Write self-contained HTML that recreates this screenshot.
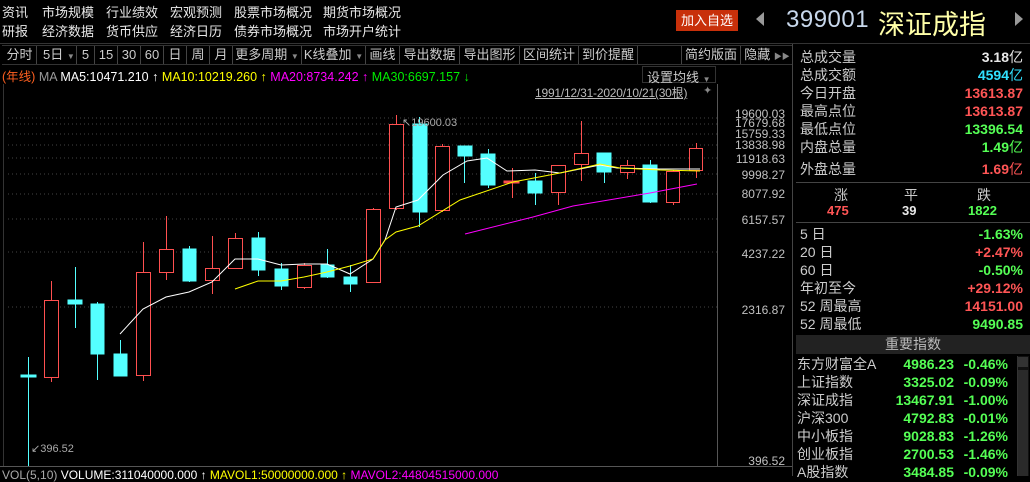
<!DOCTYPE html>
<html><head><meta charset="utf-8"><style>
*{margin:0;padding:0;box-sizing:border-box}
body{width:1030px;height:476px;background:#000;overflow:hidden;position:relative;font-family:"Liberation Sans","Noto Sans CJK SC",sans-serif;color:#ddd}
.a{position:absolute;white-space:nowrap}
.nav{font-size:13px;color:#e8e8e8}
.tb{position:absolute;top:46px;height:18px;font-size:13px;color:#ccc;border-right:1px solid #444;text-align:center;line-height:18px}
.rp{font-size:14px;color:#ccc}
.r{text-align:right}
.red{color:#ff5555}.grn{color:#55ff55}.cy{color:#30e0ff}.wh{color:#e8e8e8}
</style></head><body>
<div class="a nav" style="left:2px;top:2px">资讯</div>
<div class="a nav" style="left:42px;top:2px">市场规模</div>
<div class="a nav" style="left:106px;top:2px">行业绩效</div>
<div class="a nav" style="left:170px;top:2px">宏观预测</div>
<div class="a nav" style="left:234px;top:2px">股票市场概况</div>
<div class="a nav" style="left:323px;top:2px">期货市场概况</div>
<div class="a nav" style="left:2px;top:21px">研报</div>
<div class="a nav" style="left:42px;top:21px">经济数据</div>
<div class="a nav" style="left:106px;top:21px">货币供应</div>
<div class="a nav" style="left:170px;top:21px">经济日历</div>
<div class="a nav" style="left:234px;top:21px">债券市场概况</div>
<div class="a nav" style="left:323px;top:21px">市场开户统计</div>
<div class="a" style="left:676px;top:10px;width:62px;height:21px;background:#c8300a;color:#fff;font-size:13px;line-height:21px;text-align:center">加入自选</div>
<div class="a" style="left:756px;top:12px;width:0;height:0;border-top:7px solid transparent;border-bottom:7px solid transparent;border-right:8px solid #999"></div>
<div class="a" style="left:786px;top:6px;font-size:24px;color:#c8d8ec;letter-spacing:0.5px">399001</div>
<div class="a" style="left:878px;top:3px;font-size:27px;color:#ffffa8">深证成指</div>
<div class="a" style="left:1015px;top:12px;width:0;height:0;border-top:7px solid transparent;border-bottom:7px solid transparent;border-left:8px solid #999"></div>
<div class="a" style="left:0;top:43px;width:1030px;height:1px;background:#333"></div>
<div class="a" style="left:2px;top:45px;width:790px;height:20px;border-top:1px solid #333;border-bottom:1px solid #333"></div>
<div class="tb" style="left:3px;width:34px">分时</div>
<div class="tb" style="left:37px;width:40px;text-align:left;padding-left:6px">5日 <span style="font-size:8px;color:#888">▼</span></div>
<div class="tb" style="left:77px;width:18px">5</div>
<div class="tb" style="left:95px;width:23px">15</div>
<div class="tb" style="left:118px;width:23px">30</div>
<div class="tb" style="left:141px;width:23px">60</div>
<div class="tb" style="left:164px;width:23px">日</div>
<div class="tb" style="left:187px;width:23px">周</div>
<div class="tb" style="left:210px;width:23px">月</div>
<div class="tb" style="left:233px;width:69px">更多周期 <span style="font-size:8px;color:#888">▼</span></div>
<div class="tb" style="left:302px;width:64px">K线叠加 <span style="font-size:8px;color:#888">▼</span></div>
<div class="tb" style="left:366px;width:34px">画线</div>
<div class="tb" style="left:400px;width:60px">导出数据</div>
<div class="tb" style="left:460px;width:60px">导出图形</div>
<div class="tb" style="left:520px;width:59px">区间统计</div>
<div class="tb" style="left:579px;width:59px">到价提醒</div>
<div class="tb" style="left:681px;width:60px;border-left:1px solid #444">简约版面</div>
<div class="tb" style="left:741px;width:52px;border-right:none">隐藏 <span style="font-size:8px;color:#888">▶▶</span></div>
<div class="a" style="left:2px;top:66px;font-size:12.5px"><span style="color:#ff6020">(年线)</span> <span style="color:#999">MA</span> <span style="color:#fff">MA5:10471.210 ↑</span> <span style="color:#ffff00">MA10:10219.260 ↑</span> <span style="color:#ff00ff">MA20:8734.242 ↑</span> <span style="color:#00ee00">MA30:6697.157 ↓</span></div>
<div class="a" style="left:642px;top:66px;width:74px;height:17px;border:1px solid #333;font-size:13px;color:#ccc;padding-left:4px">设置均线 <span style="font-size:8px;color:#888">▼</span></div>
<div class="a" style="left:535px;top:84px;font-size:12px;color:#bbb;text-decoration:underline;letter-spacing:-0.2px">1991/12/31-2020/10/21(30根)</div>
<div class="a" style="left:703px;top:84px;font-size:11px;color:#888">✦</div>
<svg class="a" style="left:0;top:0" width="793" height="476">
<g stroke="#444" stroke-dasharray="1,3">
<line x1="8" x2="717" y1="118" y2="118"/><line x1="8" x2="717" y1="124" y2="124"/><line x1="8" x2="717" y1="134" y2="134"/><line x1="8" x2="717" y1="145" y2="145"/><line x1="8" x2="717" y1="158" y2="158"/><line x1="8" x2="717" y1="174" y2="174"/><line x1="8" x2="717" y1="194" y2="194"/><line x1="8" x2="717" y1="219" y2="219"/><line x1="8" x2="717" y1="252" y2="252"/><line x1="8" x2="717" y1="307" y2="307"/>
</g>
<line x1="717.5" x2="717.5" y1="84" y2="466" stroke="#555"/>
<line x1="3.5" x2="3.5" y1="84" y2="466" stroke="#333"/>
<line x1="0" x2="793" y1="466.5" y2="466.5" stroke="#555"/>
<line x1="792.5" x2="792.5" y1="44" y2="476" stroke="#444"/>
<g fill="#54ffff" stroke="#54ffff">
<line x1="28.5" x2="28.5" y1="357" y2="466"/><rect x="21" y="375" width="15" height="2"/>
<line x1="75.5" x2="75.5" y1="267" y2="328"/><rect x="68" y="300" width="14" height="4"/>
<line x1="97.5" x2="97.5" y1="302" y2="380"/><rect x="91" y="304" width="13" height="50"/>
<line x1="120.5" x2="120.5" y1="340" y2="354"/><rect x="114" y="354" width="13" height="22"/>
<line x1="189.5" x2="189.5" y1="246" y2="282"/><rect x="183" y="249" width="13" height="32"/>
<line x1="258.5" x2="258.5" y1="232" y2="276"/><rect x="252" y="238" width="13" height="32"/>
<line x1="281.5" x2="281.5" y1="263" y2="290"/><rect x="275" y="269" width="13" height="17"/>
<line x1="327.5" x2="327.5" y1="249" y2="278"/><rect x="321" y="265" width="13" height="12"/>
<line x1="350.5" x2="350.5" y1="265" y2="292"/><rect x="344" y="277" width="13" height="7"/>
<line x1="419.5" x2="419.5" y1="117" y2="227"/><rect x="413" y="124" width="14" height="88"/>
<line x1="464.5" x2="464.5" y1="146" y2="183"/><rect x="458" y="146" width="14" height="10"/>
<line x1="488.5" x2="488.5" y1="149" y2="188"/><rect x="481" y="154" width="14" height="31"/>
<line x1="535.5" x2="535.5" y1="173" y2="205"/><rect x="528" y="181" width="14" height="12"/>
<line x1="604.5" x2="604.5" y1="153" y2="183"/><rect x="597" y="153" width="14" height="19"/>
<line x1="650.5" x2="650.5" y1="160" y2="203"/><rect x="643" y="165" width="14" height="37"/>
</g>
<g fill="none" stroke="#ff5050">
<line x1="51.5" x2="51.5" y1="281" y2="382"/><rect x="44.5" y="300.5" width="14" height="77" fill="#000"/>
<line x1="143.5" x2="143.5" y1="242" y2="381"/><rect x="136.5" y="272.5" width="14" height="103" fill="#000"/>
<line x1="166.5" x2="166.5" y1="216" y2="280"/><rect x="159.5" y="249.5" width="14" height="23" fill="#000"/>
<line x1="212.5" x2="212.5" y1="236" y2="294"/><rect x="205.5" y="268.5" width="14" height="12" fill="#000"/>
<line x1="235.5" x2="235.5" y1="233" y2="268"/><rect x="228.5" y="238.5" width="14" height="30" fill="#000"/>
<line x1="304.5" x2="304.5" y1="263" y2="289"/><rect x="297.5" y="265.5" width="14" height="22" fill="#000"/>
<line x1="373.5" x2="373.5" y1="208" y2="282"/><rect x="366.5" y="209.5" width="14" height="73" fill="#000"/>
<line x1="396.5" x2="396.5" y1="115" y2="210"/><rect x="389.5" y="124.5" width="14" height="84" fill="#000"/>
<line x1="442.5" x2="442.5" y1="144" y2="212"/><rect x="435.5" y="146.5" width="14" height="64" fill="#000"/>
<line x1="512.5" x2="512.5" y1="168" y2="198"/><rect x="504" y="181" width="15" height="2" fill="#ff5050"/>
<line x1="558.5" x2="558.5" y1="165" y2="205"/><rect x="551.5" y="165.5" width="14" height="27" fill="#000"/>
<line x1="581.5" x2="581.5" y1="121" y2="181"/><rect x="574.5" y="153.5" width="14" height="11" fill="#000"/>
<line x1="627.5" x2="627.5" y1="160" y2="179"/><rect x="620.5" y="165.5" width="14" height="7" fill="#000"/>
<line x1="673.5" x2="673.5" y1="170" y2="205"/><rect x="666.5" y="171.5" width="13" height="31" fill="#000"/>
<line x1="696.5" x2="696.5" y1="143" y2="178"/><rect x="689.5" y="148.5" width="13" height="22" fill="#000"/>
</g>
<polyline fill="none" stroke="#fff" points="120,334 143,309 166,297 189,292 212,282 235,259 258,259 281,265 304,264 327,264 350,274 373,259 385,240 396,207 418,200 443,175 467,161 487,158 507,171 535,170 560,173 600,165 617,168 660,169 700,169"/>
<polyline fill="none" stroke="#ffff00" points="235,289 258,281 281,281 304,277 327,272 350,266 373,259 385,240 396,232 418,226 460,200 513,182 560,173 600,164 620,168 660,170 700,171"/>
<polyline fill="none" stroke="#ff00ff" points="465,234 533,217 573,206 650,193 697,184"/>
<g font-family="Liberation Sans, sans-serif" font-size="12" fill="#c0c0c0" text-anchor="end">
<text x="785" y="118">19600.03</text><text x="785" y="127">17679.68</text><text x="785" y="138">15759.33</text><text x="785" y="149">13838.98</text><text x="785" y="163">11918.63</text><text x="785" y="179">9998.27</text><text x="785" y="198">8077.92</text><text x="785" y="224">6157.57</text><text x="785" y="258">4237.22</text><text x="785" y="314">2316.87</text><text x="785" y="465">396.52</text>
</g>
<text x="402" y="126" font-size="11" fill="#aaa" font-family="Liberation Sans, sans-serif">↖19600.03</text>
<text x="31" y="452" font-size="11" fill="#aaa" font-family="Liberation Sans, sans-serif">↙396.52</text>
</svg>
<div class="a" style="left:2px;top:468px;font-size:12px"><span style="color:#aaa">VOL(5,10)</span> <span style="color:#fff">VOLUME:311040000.000 ↑</span> <span style="color:#ff0">MAVOL1:50000000.000 ↑</span> <span style="color:#f0f">MAVOL2:44804515000.000</span></div>
<div class="a rp" style="left:800px;top:48px;line-height:18px">总成交量<br>总成交额<br>今日开盘<br>最高点位<br>最低点位<br>内盘总量</div>
<div class="a rp" style="left:800px;top:159px">外盘总量</div>
<div class="a rp r" style="right:7px;top:48px;line-height:18px;font-weight:bold"><span class="wh">3.18<span style="font-weight:normal">亿</span></span><br><span class="cy">4594<span style="font-weight:normal">亿</span></span><br><span class="red">13613.87</span><br><span class="red">13613.87</span><br><span class="grn">13396.54</span><br><span class="grn">1.49<span style="font-weight:normal">亿</span></span></div>
<div class="a rp r red" style="right:7px;top:159px;font-weight:bold">1.69<span style="font-weight:normal">亿</span></div>
<div class="a" style="left:796px;top:182px;width:234px;height:1px;background:#444"></div>
<div class="a rp" style="left:834px;top:185px">涨</div><div class="a rp" style="left:904px;top:185px">平</div><div class="a rp" style="left:977px;top:185px">跌</div>
<div class="a rp red" style="left:827px;top:203px;font-weight:bold;font-size:13px">475</div>
<div class="a rp wh" style="left:902px;top:203px;font-weight:bold;font-size:13px">39</div>
<div class="a rp grn" style="left:968px;top:203px;font-weight:bold;font-size:13px">1822</div>
<div class="a" style="left:796px;top:222px;width:234px;height:1px;background:#444"></div>
<div class="a rp" style="left:800px;top:225px;line-height:18px">5 日<br>20 日<br>60 日<br>年初至今<br>52 周最高<br>52 周最低</div>
<div class="a rp r" style="right:7px;top:225px;line-height:18px;font-weight:bold"><span class="grn">-1.63%</span><br><span class="red">+2.47%</span><br><span class="grn">-0.50%</span><br><span class="red">+29.12%</span><br><span class="red">14151.00</span><br><span class="grn">9490.85</span></div>
<div class="a" style="left:796px;top:335px;width:234px;height:19px;background:#222;color:#bbb;font-size:14px;text-align:center;line-height:19px">重要指数</div>
<div class="a rp" style="left:797px;top:355px;line-height:18px">东方财富全A<br>上证指数<br>深证成指<br>沪深300<br>中小板指<br>创业板指<br>A股指数</div>
<div class="a rp r grn" style="right:76px;top:355px;line-height:18px;font-weight:bold">4986.23<br>3325.02<br>13467.91<br>4792.83<br>9028.83<br>2700.53<br>3484.85</div>
<div class="a rp r grn" style="right:22px;top:355px;line-height:18px;font-weight:bold">-0.46%<br>-0.09%<br>-1.00%<br>-0.01%<br>-1.26%<br>-1.46%<br>-0.09%</div>
<div class="a" style="left:1017px;top:356px;width:12px;height:120px;background:#111;border-left:1px solid #333"></div>
<div class="a" style="left:1018px;top:357px;width:10px;height:10px;background:#333"></div>
<div class="a" style="left:1018px;top:370px;width:10px;height:106px;background:#2a2a2a"></div>
</body></html>
